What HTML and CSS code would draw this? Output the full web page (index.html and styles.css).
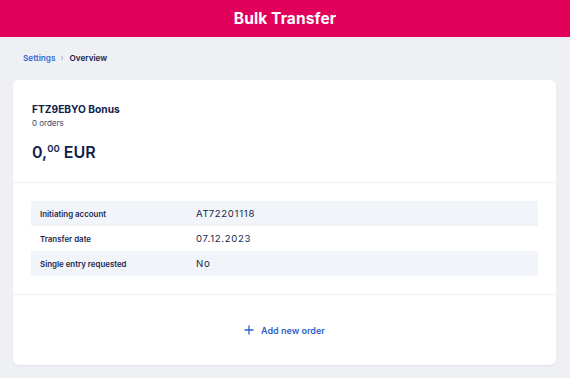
FILE: index.html
```html
<!DOCTYPE html>
<html>
<head>
<meta charset="utf-8">
<link rel="stylesheet" href="styles.css">
</head>
<body>
<header class="topbar">Bulk Transfer</header>
<nav class="crumbs">
  <a class="crumb-link">Settings</a>
  <svg class="crumb-sep" width="6" height="6" viewBox="0 0 6 6"><path d="M2 1l2 2-2 2" fill="none" stroke="#9aa3b5" stroke-width="0.9"/></svg>
  <span class="crumb-current">Overview</span>
</nav>
<main class="card">
  <section class="card-head">
    <h1 class="title">FTZ9EBYO Bonus</h1>
    <div class="subtitle">0 orders</div>
    <div class="amount">0,<sup class="cents">00</sup> EUR</div>
  </section>
  <section class="card-body">
    <div class="details">
      <div class="row stripe"><span class="label">Initiating account</span><span class="value">AT72201118</span></div>
      <div class="row"><span class="label">Transfer date</span><span class="value">07.12.2023</span></div>
      <div class="row stripe"><span class="label">Single entry requested</span><span class="value">No</span></div>
    </div>
  </section>
  <section class="card-foot">
    <a class="add-btn">
      <svg class="plus" width="10" height="10" viewBox="0 0 10 10"><path d="M5 1v8M1 5h8" stroke="#2f62c9" stroke-width="1.3" stroke-linecap="round"/></svg>
      <span>Add new order</span>
    </a>
  </section>
</main>
</body>
</html>
```
FILE: styles.css
```css
* { box-sizing: border-box; }
html, body { margin: 0; padding: 0; }
body {
  background: #eef0f4;
  font-family: Inter, "Noto Sans", sans-serif;
  color: #0f1f4b;
  width: 570px;
  height: 378px;
  overflow: hidden;
}
.topbar {
  height: 37px;
  background: #e1005a;
  color: #fff;
  font-weight: 700;
  font-size: 15.5px;
  display: flex;
  align-items: center;
  justify-content: center;
  letter-spacing: 0.1px;
}
.crumbs {
  display: flex;
  align-items: center;
  gap: 3px;
  height: 43px;
  padding: 0 0 2px 23px;
  font-size: 8.2px;
  font-weight: 600;
}
.crumb-link { color: #3569d3; }
.crumb-sep { margin: 0 1px; }
.crumb-current { color: #14224b; }
.card {
  margin: 0 14px 0 13px;
  height: 285px;
  background: #fff;
  border-radius: 6px;
  box-shadow: 0 1px 2px rgba(20, 30, 60, 0.06);
  display: flex;
  flex-direction: column;
}
.card-head {
  height: 103px;
  padding: 22px 19px 0;
  border-bottom: 1px solid #eef0f3;
}
.title {
  margin: 0;
  font-size: 10.2px;
  line-height: 14px;
  font-weight: 700;
}
.subtitle {
  margin-top: 2px;
  font-size: 8px;
  line-height: 11px;
  color: #3b4767;
}
.amount {
  margin-top: 13px;
  font-size: 16px;
  line-height: 20px;
  font-weight: 600;
}
.cents {
  font-size: 9.5px;
  vertical-align: 0;
  position: relative;
  top: -6px;
  margin-right: 0;
}
.card-body {
  height: 112px;
  padding: 18px 18px 0 18px;
  border-bottom: 1px solid #eef0f3;
}
.details { display: flex; flex-direction: column; }
.row {
  height: 25px;
  display: flex;
  align-items: center;
  padding-left: 9px;
}
.stripe { background: #f1f4f8; }
.label {
  width: 156px;
  font-size: 7.9px;
  font-weight: 600;
  color: #1a2850;
}
.value {
  font-size: 9.6px;
  letter-spacing: 0.7px;
  color: #1a2850;
}
.card-foot {
  flex: 1;
  display: flex;
  align-items: center;
  justify-content: center;
}
.add-btn {
  display: flex;
  align-items: center;
  gap: 7px;
  color: #2f62c9;
  font-size: 9px;
  font-weight: 600;
}
```
